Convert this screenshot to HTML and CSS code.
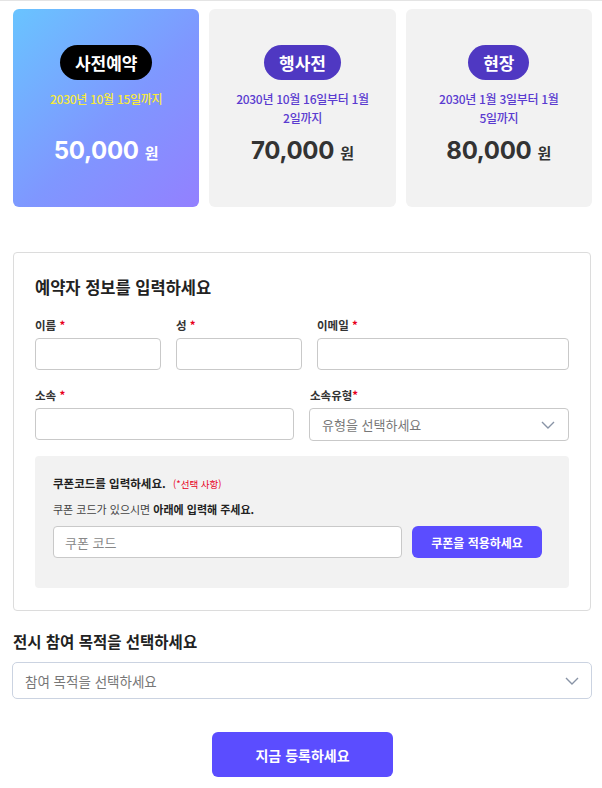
FILE: index.html
```html
<!DOCTYPE html>
<html lang="ko">
<head>
<meta charset="utf-8">
<title>등록</title>
<link rel="stylesheet" href="styles.css">
</head>
<body>
<div class="page">
  <div class="tickets">
    <div class="ticket ticket-active">
      <span class="badge badge-dark">사전예약</span>
      <p class="date date-yellow">2030년 10월 15일까지</p>
      <p class="price"><span class="amount">50,000</span><span class="won">원</span></p>
    </div>
    <div class="ticket">
      <span class="badge">행사전</span>
      <p class="date">2030년 10월 16일부터 1월 2일까지</p>
      <p class="price"><span class="amount">70,000</span><span class="won">원</span></p>
    </div>
    <div class="ticket">
      <span class="badge">현장</span>
      <p class="date">2030년 1월 3일부터 1월 5일까지</p>
      <p class="price"><span class="amount">80,000</span><span class="won">원</span></p>
    </div>
  </div>

  <div class="form-box">
    <h2 class="form-title">예약자 정보를 입력하세요</h2>
    <div class="row row-3">
      <div class="field">
        <label class="label">이름 <span class="req">*</span></label>
        <input class="input" type="text">
      </div>
      <div class="field">
        <label class="label">성 <span class="req">*</span></label>
        <input class="input" type="text">
      </div>
      <div class="field">
        <label class="label">이메일 <span class="req">*</span></label>
        <input class="input" type="text">
      </div>
    </div>
    <div class="row row-2">
      <div class="field">
        <label class="label">소속 <span class="req">*</span></label>
        <input class="input" type="text">
      </div>
      <div class="field">
        <label class="label">소속유형<span class="req">*</span></label>
        <div class="select select-sm">
          <span class="placeholder">유형을 선택하세요</span>
          <svg class="chev" width="14" height="8" viewBox="0 0 14 8"><polyline points="1,1 7,7 13,1" fill="none" stroke="#8893a6" stroke-width="1.4"/></svg>
        </div>
      </div>
    </div>
    <div class="coupon">
      <p class="coupon-title">쿠폰코드를 입력하세요. <span class="optional">(*선택 사항)</span></p>
      <p class="coupon-desc">쿠폰 코드가 있으시면 <b>아래에 입력해 주세요.</b></p>
      <div class="coupon-row">
        <input class="input coupon-input" type="text" placeholder="쿠폰 코드">
        <button class="btn coupon-btn">쿠폰을 적용하세요</button>
      </div>
    </div>
  </div>

  <h2 class="section-title">전시 참여 목적을 선택하세요</h2>
  <div class="select select-lg">
    <span class="placeholder">참여 목적을 선택하세요</span>
    <svg class="chev" width="14" height="8" viewBox="0 0 14 8"><polyline points="1,1 7,7 13,1" fill="none" stroke="#8893a6" stroke-width="1.4"/></svg>
  </div>

  <div class="submit-wrap">
    <button class="btn submit-btn">지금 등록하세요</button>
  </div>
</div>
</body>
</html>
```

FILE: styles.css
```css
* { box-sizing: border-box; }
html, body { margin: 0; padding: 0; background: #fff; }
body {
  font-family: "Noto Sans CJK KR", "Noto Sans", sans-serif;
  color: #222;
  border-top: 1px solid #e4e4e4;
}
p, h2 { margin: 0; }

.page { padding: 8px 10px 0 13px; }

.tickets {
  display: grid;
  grid-template-columns: repeat(3, minmax(0, 1fr));
  gap: 10px;
}
.ticket {
  height: 198px;
  background: #f2f2f2;
  border-radius: 6px;
  display: flex;
  flex-direction: column;
  align-items: center;
  padding: 36px 18px 0;
  text-align: center;
}
.ticket-active {
  background: linear-gradient(135deg, #69c4ff 0%, #7f97ff 55%, #9380ff 100%);
}
.badge {
  display: inline-block;
  height: 35px;
  line-height: 35px;
  padding: 0 15px;
  border-radius: 18px;
  background: #4f38c2;
  color: #fff;
  font-size: 17px;
  font-weight: 700;
}
.badge-dark { background: #000; }
.date {
  margin-top: 9px;
  min-height: 38px;
  font-size: 12px;
  font-weight: 500;
  line-height: 19px;
  letter-spacing: -0.3px;
  color: #5a3bd0;
  word-break: keep-all;
}
.date-yellow { color: #f7ea3a; }
.price {
  margin-top: 9px;
  display: flex;
  align-items: baseline;
  gap: 6px;
  color: #333;
  line-height: 30px;
}
.ticket-active .price { color: #fff; }
.amount {
  font-family: "Inter", "Noto Sans", sans-serif;
  font-size: 24px;
  font-weight: 700;
  letter-spacing: -0.3px;
}
.won { font-size: 15px; font-weight: 700; }

.form-box {
  margin-top: 45px;
  margin-right: 1px;
  border: 1px solid #dcdcdc;
  border-radius: 4px;
  padding: 21px 21px 22px;
}
.form-title {
  font-size: 16.5px;
  font-weight: 700;
  line-height: 26px;
  color: #222;
  margin-bottom: 17px;
}
.row { display: grid; gap: 15px; margin-bottom: 17px; }
.row-3 { grid-template-columns: minmax(0, 1fr) minmax(0, 1fr) minmax(0, 2fr); }
.row-2 { grid-template-columns: minmax(0, 1fr) minmax(0, 1fr); gap: 16px; margin-bottom: 15px; }
.field { display: flex; flex-direction: column; }
.label {
  font-size: 11.5px;
  font-weight: 700;
  line-height: 16px;
  color: #333;
  margin-bottom: 5px;
}
.req { color: #e8001c; }
.input {
  width: 100%;
  height: 32px;
  border: 1px solid #c9c9c9;
  border-radius: 4px;
  background: #fff;
  font-family: inherit;
  font-size: 13px;
  padding: 0 11px;
  outline: none;
}
.select {
  display: flex;
  align-items: center;
  justify-content: space-between;
  border: 1px solid #c9c9c9;
  border-radius: 4px;
  background: #fff;
}
.select-sm { height: 33px; padding: 0 13px 0 12px; }
.placeholder { color: #777; font-size: 13px; }
.row-2 .select-sm { margin-left: -1px; }

.coupon {
  background: #f2f2f2;
  border-radius: 4px;
  padding: 19px 27px 30px 18px;
}
.coupon-title {
  font-size: 11.5px;
  font-weight: 700;
  line-height: 17px;
  color: #222;
}
.optional {
  margin-left: 4px;
  font-size: 9.5px;
  font-weight: 400;
  color: #e8001c;
}
.coupon-desc {
  margin-top: 8px;
  font-size: 11px;
  line-height: 16px;
  color: #444;
}
.coupon-desc b { color: #222; }
.coupon-row {
  margin-top: 9px;
  display: flex;
  gap: 10px;
}
.coupon-input { flex: 1; }
.coupon-input::placeholder { color: #888; }
.btn {
  border: 0;
  background: #5b4dff;
  color: #fff;
  font-family: inherit;
  font-weight: 700;
  cursor: pointer;
}
.coupon-btn {
  flex: none;
  width: 130px;
  height: 32px;
  border-radius: 6px;
  font-size: 12px;
}

.section-title {
  margin-top: 19px;
  font-size: 15.5px;
  font-weight: 700;
  line-height: 22px;
  color: #222;
}
.select-lg {
  margin-top: 10px;
  margin-left: -1px;
  height: 37px;
  padding: 0 12px 0 12px;
  border-color: #cbd3e1;
  border-radius: 5px;
}
.select-lg .placeholder { font-size: 13.5px; }

.submit-wrap {
  display: flex;
  justify-content: center;
  margin-top: 33px;
}
.submit-btn {
  width: 181px;
  height: 45px;
  border-radius: 6px;
  font-size: 14px;
}
```
